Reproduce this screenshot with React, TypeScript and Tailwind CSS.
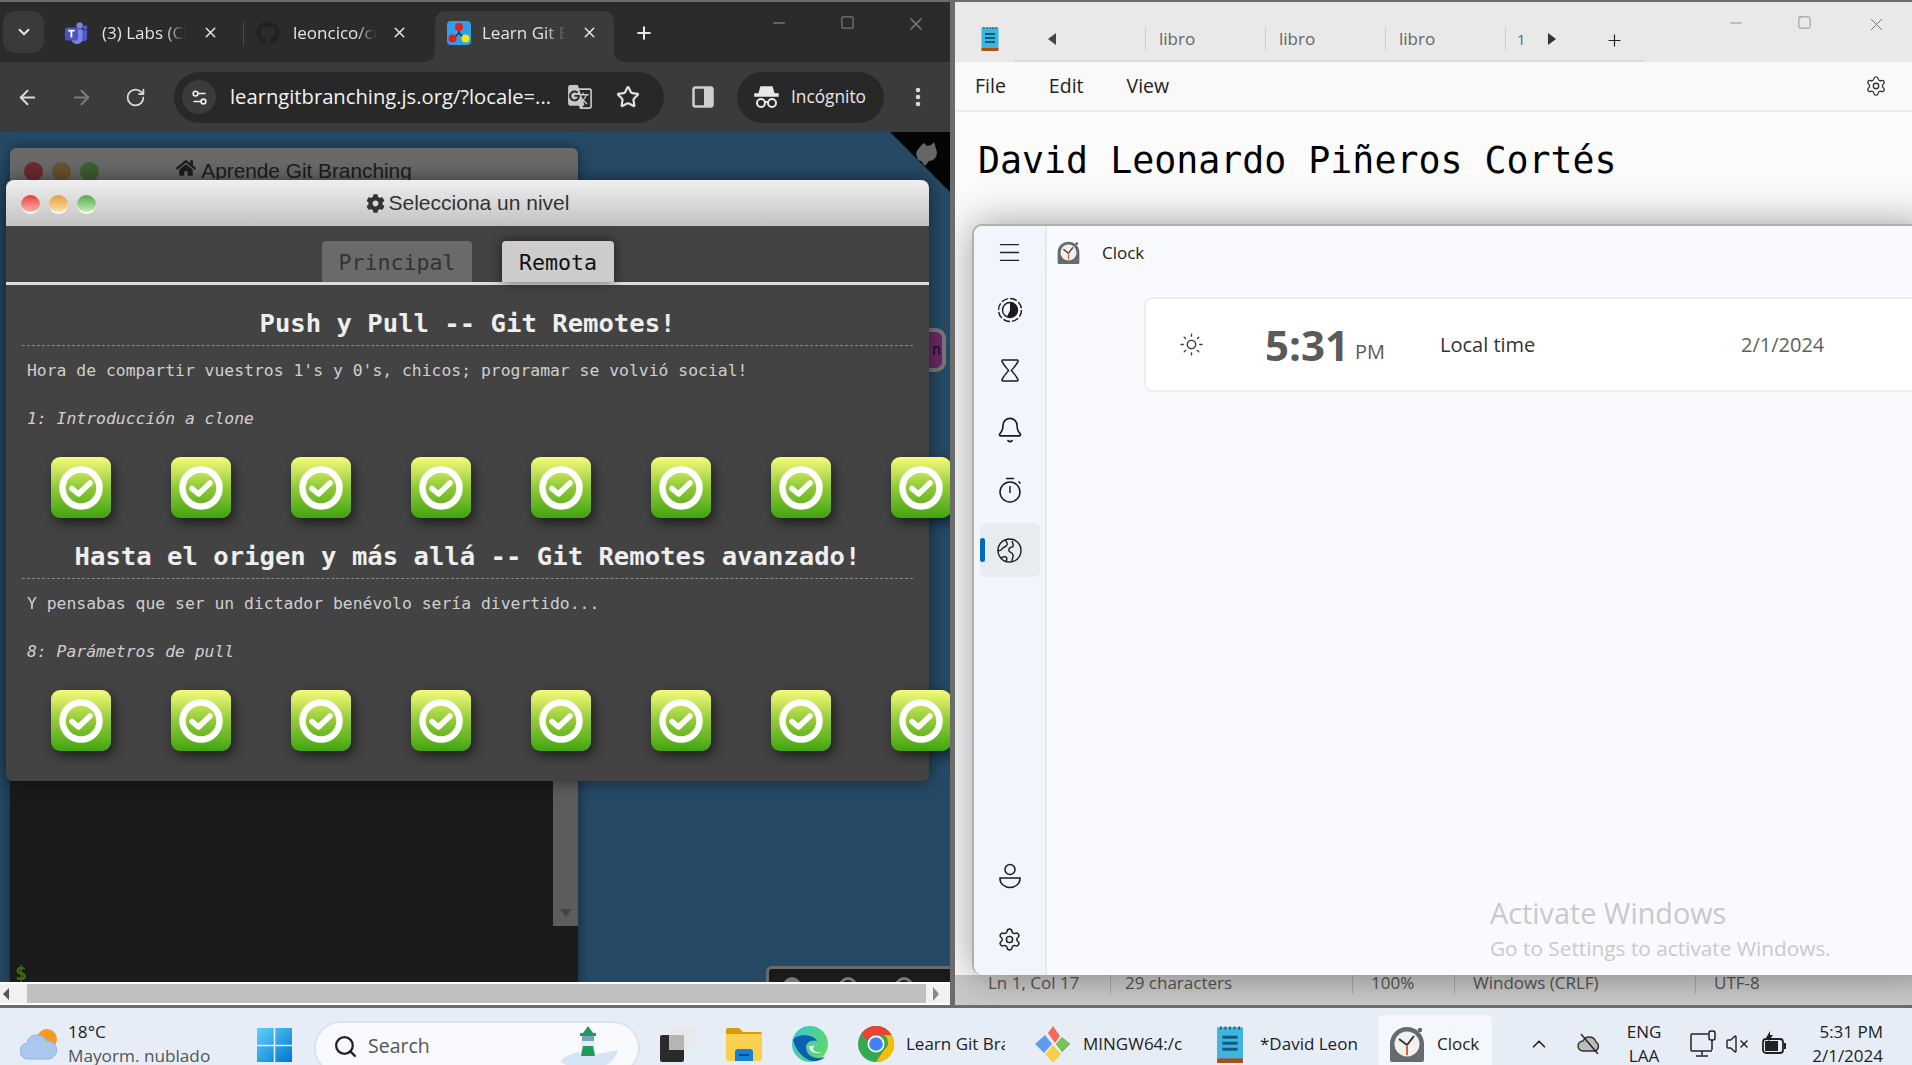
import React from "react";
import {
  ArrowLeft,
  ArrowRight,
  Bell,
  ChevronDown,
  ChevronUp,
  EllipsisVertical,
  Menu,
  Minus,
  Plus,
  RotateCw,
  Search,
  Settings,
  Settings2,
  Square,
  Star,
  Sun,
  VolumeX,
  X,
} from "lucide-react";
import { FaCog, FaGithub, FaHome } from "react-icons/fa";
import { MdGTranslate } from "react-icons/md";

const sans = "font-['Open_Sans','Noto_Sans',sans-serif]";
const mono = "font-['DejaVu_Sans_Mono',monospace]";

function TeamsIcon() {
  return (
    <svg width="26" height="24" viewBox="0 0 26 24">
      <circle cx="17" cy="4" r="3.5" fill="#7b83eb" />
      <circle cx="23" cy="6" r="2.5" fill="#5059c9" />
      <path d="M14 9h11v8a4 4 0 0 1-4 4h-7z" fill="#5059c9" />
      <path d="M8 8h12v10a6 6 0 0 1-12 0z" fill="#7b83eb" />
      <rect x="1" y="6" width="14" height="14" rx="2" fill="#4b53bc" />
      <path d="M4.5 9.5h7M8 9.5v7.5" stroke="#fff" strokeWidth="2" />
    </svg>
  );
}

function LearnGitIcon() {
  return (
    <svg width="24" height="24" viewBox="0 0 24 24">
      <rect width="24" height="24" rx="4" fill="#2e9fe8" />
      <path d="M12 6v6M12 12l-6 6M12 12l6 6" stroke="#222" strokeWidth="1.2" />
      <circle cx="12" cy="6" r="4" fill="#e81c1c" />
      <circle cx="5.5" cy="17.5" r="4" fill="#e81c1c" />
      <circle cx="18.5" cy="17.5" r="4" fill="#f0e81c" />
    </svg>
  );
}

function TabCorner({ side }: { side: "left" | "right" }) {
  return (
    <svg
      width="10"
      height="10"
      viewBox="0 0 10 10"
      className={`absolute bottom-0 ${side === "left" ? "-left-[10px]" : "-right-[10px]"}`}
    >
      <path d={side === "left" ? "M10 0v10H0a10 10 0 0 0 10-10z" : "M0 0v10h10A10 10 0 0 1 0 0z"} fill="#3b3b3b" />
    </svg>
  );
}

function ChromeTab({
  icon,
  label,
  labelClass,
  closeClass,
  active,
  className,
}: {
  icon: React.ReactNode;
  label: string;
  labelClass: string;
  closeClass: string;
  active?: boolean;
  className: string;
}) {
  return (
    <div className={`relative flex items-center h-[51px] pb-[8px] self-end ${active ? "bg-[#3b3b3b] rounded-t-[10px]" : ""} ${className}`}>
      {active && <TabCorner side="left" />}
      {active && <TabCorner side="right" />}
      <div className="w-[24px] flex justify-center shrink-0 ml-[12px]">{icon}</div>
      <div
        className={`overflow-hidden whitespace-nowrap text-[17px] text-[#e4e4e4] [mask-image:linear-gradient(90deg,#000_75%,transparent)] w-[84px] ${labelClass}`}
      >
        {label}
      </div>
      <X size={17} color="#e8e8e8" className={`absolute top-[13px] ${closeClass}`} strokeWidth={2} />
    </div>
  );
}

function Lights({ dim }: { dim?: boolean }) {
  const cls = dim
    ? ["bg-[#6c2b2b]", "bg-[#6a5230]", "bg-[#3d5f30]"]
    : [
        "bg-linear-to-b from-[#e03a3a] to-[#ffb0a8]",
        "bg-linear-to-b from-[#e0a040] to-[#ffe0a0]",
        "bg-linear-to-b from-[#50a850] to-[#c0f0b0]",
      ];
  return (
    <div className="flex gap-[9px]">
      {cls.map((c) => (
        <div key={c} className={`w-[19px] h-[19px] rounded-full ${c} ${dim ? "" : "border-b-2 border-white"}`} />
      ))}
    </div>
  );
}

function LevelIcon() {
  return (
    <div className="w-[60px] h-[61px] shrink-0 rounded-[9px] bg-linear-to-b from-[#f7fb7a] via-[#8fca36] via-50% to-[#3da50e] flex items-center justify-center shadow-[3px_5px_12px_rgba(0,0,0,0.55)]">
      <svg width="44" height="44" viewBox="0 0 44 44">
        <circle cx="22" cy="22" r="18.5" fill="none" stroke="#fff" strokeWidth="6.5" />
        <path d="M13 22.5l6.5 5.5L31 17" fill="none" stroke="#fff" strokeWidth="5.5" strokeLinecap="round" strokeLinejoin="round" />
      </svg>
    </div>
  );
}

function LevelSection({ title, desc, sub }: { title: string; desc: string; sub: string }) {
  return (
    <div>
      <h2 className="mx-[16px] mt-[19px] h-[42px] border-b border-dashed border-[#8a8a8a] text-center text-[25.6px] leading-[38px] font-bold text-[#eeeeee] whitespace-nowrap">
        {title}
      </h2>
      <p className="ml-[21px] mt-[13px] h-[24px] text-[16.4px] leading-[24px] text-[#cfcfcf] whitespace-nowrap">{desc}</p>
      <p className="ml-[21px] mt-[24px] h-[23px] text-[16.4px] leading-[24px] italic text-[#cfcfcf] whitespace-nowrap">{sub}</p>
      <div className="flex gap-[60px] pl-[45px] mt-[27px]">
        {[0, 1, 2, 3, 4, 5, 6, 7].map((n) => (
          <LevelIcon key={n} />
        ))}
      </div>
    </div>
  );
}

function LevelDialog() {
  return (
    <div className={`absolute left-[6px] top-[48px] w-[923px] h-[601px] rounded-[6px] bg-[#434343] shadow-[0_0_18px_rgba(0,0,0,0.5)] ${mono}`}>
      <div className="relative h-[46px] rounded-t-[8px] bg-linear-to-b from-[#efefef] to-[#c2c2c2] flex items-center justify-center font-['Liberation_Sans',sans-serif] text-[21px] text-[#333]">
        <div className="absolute left-[15px] top-[15px]">
          <Lights />
        </div>
        <FaCog size={19} className="mr-[4px]" />
        Selecciona un nivel
      </div>
      <div className="h-[59px] border-b-[3px] border-[#dddddd] flex items-end pl-[316px] gap-[30px] text-[21.6px]">
        <div className="w-[150px] h-[41px] pt-[4px] rounded-t-[4px] bg-[#6a6a6a] text-[#333] flex items-center justify-center">Principal</div>
        <div className="w-[112px] h-[41px] pt-[4px] rounded-t-[4px] bg-[#cccccc] text-[#111] flex items-center justify-center shadow-[0_0_12px_rgba(0,0,0,0.6)]">Remota</div>
      </div>
      <LevelSection
        title="Push y Pull -- Git Remotes!"
        desc="Hora de compartir vuestros 1's y 0's, chicos; programar se volvió social!"
        sub="1: Introducción a clone"
      />
      <LevelSection
        title="Hasta el origen y más allá -- Git Remotes avanzado!"
        desc="Y pensabas que ser un dictador benévolo sería divertido..."
        sub="8: Parámetros de pull"
      />
    </div>
  );
}

function BrowserPage() {
  return (
    <div className="relative flex-1 bg-[#264a66] overflow-hidden">
      {/* ventana de atras */}
      <div className="absolute left-[10px] top-[16px] w-[568px] h-[900px] rounded-t-[6px] bg-[#1a1a1a] shadow-[0_0_14px_rgba(0,0,0,0.45)]">
        <div className="relative h-[40px] rounded-t-[6px] bg-[#696969] flex items-start justify-center pt-[7px] text-[20.8px] text-[#1c1c1c] font-['Liberation_Sans',sans-serif]">
          <div className="absolute left-[14px] top-[14px]">
            <Lights dim />
          </div>
          <FaHome size={20} className="mr-[5px] mt-[3px]" />
          Aprende Git Branching
        </div>
        <div className="absolute right-0 top-[600px] w-[25px] h-[178px] bg-[#5c5c5c] flex items-end justify-center pb-[9px]">
          <div className="w-0 h-0 border-x-[6px] border-x-transparent border-t-[8px] border-t-[#444]" />
        </div>
        <div className={`absolute left-[5px] top-[810px] text-[20px] font-bold text-[#3f6a10] ${mono}`}>$</div>
      </div>

      <svg className="absolute right-0 top-0" width="60" height="60" viewBox="0 0 60 60">
        <polygon points="0,0 60,0 60,60" fill="#050505" />
        <path d="M27 19c2-3 4-6 7-8l3 3 4-1 3-3 3 10c0 6-4 9-8 9l-4 5-4-5-3-1-2-6z" fill="#666" />
      </svg>

      {/* boton de la derecha, tapado por el dialogo */}
      <div className="absolute left-[918px] top-[196px] w-[28px] h-[44px] rounded-[10px] border-[4px] border-[#777] bg-[#6b2a68] flex items-center justify-end pr-[1px] text-[15px] text-[#111] font-['DejaVu_Sans_Mono',monospace] overflow-hidden">
        n
      </div>

      <div className="absolute left-[766px] top-[834px] w-[200px] h-[40px] rounded-tl-[6px] border-[3px] border-[#6a6a6a] bg-[#1a1a1a] flex pl-[14px] gap-[38px] pt-[8px]">
        <div className="w-[18px] h-[18px] rounded-full border-[5px] border-[#777]" />
        <div className="w-[18px] h-[18px] rounded-full border-[3px] border-[#777]" />
        <div className="w-[18px] h-[18px] rounded-full border-[3px] border-[#777]" />
      </div>

      <LevelDialog />
    </div>
  );
}

function ChromeWindow() {
  return (
    <div className={`w-[955px] h-full shrink-0 flex flex-col border-r-[5px] border-[#6c6c6c] ${sans}`}>
      <div className="h-[60px] bg-[#2b2b2b] flex relative">
        <div className="ml-[3px] mt-[9px] w-[41px] h-[42px] rounded-[12px] bg-[#3a3a3a] flex items-center justify-center">
          <ChevronDown size={18} color="#e8e8e8" strokeWidth={2.5} />
        </div>
        <ChromeTab className="ml-[8px] w-[191px]" icon={<TeamsIcon />} label="(3) Labs (Chat | Microsoft Teams" labelClass="ml-[14px]" closeClass="right-[24px]" />
        <div className="w-px h-[24px] bg-[#4a4a4a] self-center mt-[3px]" />
        <ChromeTab className="w-[190px]" icon={<FaGithub size={24} color="#1c2228" />} label="leoncico/curso-git" labelClass="ml-[13px]" closeClass="right-[26px]" />
        <ChromeTab className="ml-[1px] w-[179px]" active icon={<LearnGitIcon />} label="Learn Git Branching" labelClass="ml-[11px]" closeClass="right-[16px]" />
        <Plus size={20} color="#e8e8e8" strokeWidth={2.5} className="ml-[20px] mt-[21px]" />
        <div className="absolute left-[770px] top-[12px] flex">
          <Minus size={18} color="#777" />
          <Square size={15} color="#777" className="ml-[52px] mt-[1px]" />
          <X size={20} color="#777" className="ml-[51px]" />
        </div>
      </div>
      <div className="h-[70px] bg-[#3b3b3b] flex items-center">
        <ArrowLeft size={23} color="#dcdcdc" className="ml-[16px]" strokeWidth={2} />
        <ArrowRight size={23} color="#7d7d7d" className="ml-[31px]" strokeWidth={2} />
        <RotateCw size={21} color="#dcdcdc" className="ml-[32px]" strokeWidth={2} />
        <div className="ml-[28px] w-[490px] h-[51px] rounded-full bg-[#282828] flex items-center">
          <div className="ml-[8px] w-[34px] h-[34px] rounded-full bg-[#3b3b3b] flex items-center justify-center">
            <Settings2 size={19} color="#eee" />
          </div>
          <div className="ml-[14px] w-[320px] pb-[2px] text-[20.2px] text-[#f2f2f2] whitespace-nowrap">learngitbranching.js.org/?locale=...</div>
          <MdGTranslate size={26} color="#c8c8c8" className="ml-[17px]" />
          <Star size={24} color="#e2e2e2" strokeWidth={2.2} className="ml-[23px]" />
        </div>
        <svg className="ml-[27px]" width="24" height="24" viewBox="0 0 24 24">
          <rect x="2.5" y="2.5" width="19" height="19" rx="2" fill="none" stroke="#cfcfcf" strokeWidth="2.5" />
          <rect x="13" y="3" width="8" height="18" fill="#cfcfcf" />
        </svg>
        <div className="ml-[22px] w-[147px] h-[51px] rounded-full bg-[#282828] flex items-center">
          <svg className="ml-[17px]" width="25" height="24" viewBox="0 0 25 24">
            <path d="M7 2h11l2 7h4v2H1V9h4z" fill="#e8e8e8" stroke="#e8e8e8" strokeWidth="1.5" />
            <circle cx="7" cy="18" r="4" fill="none" stroke="#e8e8e8" strokeWidth="2" />
            <circle cx="18" cy="18" r="4" fill="none" stroke="#e8e8e8" strokeWidth="2" />
            <path d="M11 17h3" stroke="#e8e8e8" strokeWidth="2" />
          </svg>
          <span className="ml-[12px] text-[17.3px] text-[#e8e8e8]">Incógnito</span>
        </div>
        <EllipsisVertical size={24} color="#dcdcdc" className="ml-[22px]" strokeWidth={2.6} />
      </div>
      <BrowserPage />
      <div className="h-[23px] bg-[#f1f1f1] flex items-center border-y-2 border-white">
        <div className="w-0 h-0 ml-[3px] border-y-[6px] border-y-transparent border-r-[6px] border-r-[#555]" />
        <div className="ml-[18px] w-[899px] h-full bg-[#c0c0c0]" />
        <div className="w-0 h-0 ml-[7px] border-y-[7px] border-y-transparent border-l-[6px] border-l-[#888]" />
      </div>
    </div>
  );
}

function NotepadIcon({ w, h }: { w: number; h: number }) {
  return (
    <svg width={w} height={h} viewBox="0 0 18 25">
      <rect x="0.5" y="1.5" width="17" height="21" fill="#3fb4dc" />
      <rect x="0.5" y="22" width="17" height="3" fill="#a84f14" />
      <path d="M3 1v2M6 1v2M9 1v2M12 1v2M15 1v2" stroke="#1a5f80" strokeWidth="1.2" />
      <path d="M4 8h10M4 12h10M4 16h10" stroke="#0f5a86" strokeWidth="2" />
    </svg>
  );
}

function ClockLogo({ size }: { size: number }) {
  return (
    <svg width={size} height={size} viewBox="0 0 36 36">
      <path d="M1 18a17 17 0 0 1 34 0v16a2 2 0 0 1-2 2H3a2 2 0 0 1-2-2z" fill="#666b70" />
      <circle cx="31" cy="4" r="2.2" fill="#666" />
      <circle cx="18" cy="18" r="12.5" fill="#f2f0ec" />
      <path d="M18 19L10 13M18 19l7-9" stroke="#333" strokeWidth="2" fill="none" />
      <path d="M18 19v10" stroke="#d9603c" strokeWidth="2" />
    </svg>
  );
}

function WorldClockIcon() {
  return (
    <svg width="26" height="26" viewBox="0 0 26 26">
      <circle cx="13" cy="13" r="11.5" fill="none" stroke="#1c1c1c" strokeWidth="1.4" strokeDasharray="7 2" />
      <circle cx="13" cy="13" r="7.5" fill="none" stroke="#1c1c1c" strokeWidth="1.4" />
      <path d="M13 5.5a7.5 7.5 0 0 1 0 15 7 7 0 0 1-3-1l3-6z" fill="#1c1c1c" />
    </svg>
  );
}

function HourglassIcon() {
  return (
    <svg width="20" height="25" viewBox="0 0 22 26" fill="none" stroke="#1c1c1c" strokeWidth="1.6" strokeLinejoin="round">
      <path d="M3 1.5h16c1 0 1 1 .7 1.7C18 7 15 10 12.5 13c2.500 3 5.500 6 7.200 9.800.3.700.3 1.700-.7 1.700H3c-1 0-1-1-.7-1.700C4 19 7 16 9.500 13 7 10 4 7 2.300 3.200 2 2.500 2 1.500 3 1.500z" />
    </svg>
  );
}

function StopwatchIcon() {
  return (
    <svg width="24" height="26" viewBox="0 0 24 26" fill="none" stroke="#1c1c1c" strokeWidth="1.5">
      <circle cx="12" cy="15" r="10" />
      <path d="M8 1.500h8M12 9v7M20.500 4.500l2 2" />
    </svg>
  );
}

function GlobeIcon() {
  return (
    <svg width="25" height="25" viewBox="0 0 25 25" fill="none" stroke="#1c1c1c" strokeWidth="1.4" strokeLinejoin="round">
      <circle cx="12.500" cy="12.500" r="11.500" />
      <path d="M8 2c2 2 3 3 2 5-1 2-4 2-5 4s-4 2-4 1" />
      <path d="M15 24c-1-3 2-4 1-7s-3-2-4-4 1-4 3-4 1-3 0-6" />
      <path d="M4 20c2-1 4-2 5-1s1 3 0 5" />
    </svg>
  );
}

function PersonIcon() {
  return (
    <svg width="24" height="26" viewBox="0 0 24 26" fill="none" stroke="#1c1c1c" strokeWidth="1.5">
      <circle cx="12" cy="6.500" r="5" />
      <path d="M2 15h20c.5 6-5 9.500-10 9.500S1.500 21 2 15z" />
    </svg>
  );
}

function NavItem({ children, active }: { children: React.ReactNode; active?: boolean }) {
  return (
    <div className={`relative w-[60px] h-[54px] rounded-[6px] flex items-center justify-center ${active ? "bg-[#e8ebef]" : ""}`}>
      {active && <div className="absolute left-0 top-[15px] w-[5px] h-[24px] rounded-full bg-[#0067c0]" />}
      {children}
    </div>
  );
}

function ClockWindow() {
  return (
    <div className={`absolute left-[17px] top-[222px] w-[960px] h-[751px] rounded-l-[10px] border-l-2 border-t-2 border-[#b0b0b0] bg-[#f9fafe] flex shadow-[0_0_40px_rgba(0,0,0,0.38)] ${sans}`}>
      <div className="w-[73px] shrink-0 bg-[#f2f5fb] border-r-2 border-[#e6e9ef] rounded-l-[10px] flex flex-col items-center pb-[9px]">
        <div className="-mt-[1px]">
          <NavItem><Menu size={27} strokeWidth={1.2} color="#222" /></NavItem>
        </div>
        <div className="flex flex-col items-center gap-[6px] mt-[4px]">
          <NavItem><WorldClockIcon /></NavItem>
          <NavItem><HourglassIcon /></NavItem>
          <NavItem><Bell size={28} strokeWidth={1.4} color="#1c1c1c" /></NavItem>
          <NavItem><StopwatchIcon /></NavItem>
          <NavItem active><GlobeIcon /></NavItem>
        </div>
        <div className="flex flex-col items-center gap-[9px] mt-auto">
          <NavItem><PersonIcon /></NavItem>
          <NavItem><Settings size={25} strokeWidth={1.4} color="#1c1c1c" /></NavItem>
        </div>
      </div>
      <div className="flex-1 flex flex-col relative">
        <div className="h-[71px] pb-[18px] flex items-center pl-[10px]">
          <ClockLogo size={23} />
          <span className="ml-[22px] text-[17px] text-[#1c1c1c]">Clock</span>
        </div>
        <div className="ml-[97px] h-[95px] rounded-l-[8px] border-2 border-r-0 border-[#eceef2] bg-white flex items-center">
          <Sun size={25} strokeWidth={1.3} color="#333" className="ml-[33px]" />
          <span className="ml-[61px] w-[87px] text-[42px] font-bold text-[#5a5a5a] leading-none">5:31</span>
          <span className="ml-[3px] mt-[14px] w-[40px] text-[20px] text-[#5a5a5a]">PM</span>
          <span className="ml-[45px] mt-[1px] w-[301px] text-[20px] text-[#333]">Local time</span>
          <span className="mt-[1px] text-[20px] text-[#5f5f5f]">2/1/2024</span>
        </div>
        <div className="absolute left-[443px] top-[669px] text-[#c9c9cb] whitespace-nowrap">
          <div className="text-[28.8px] leading-[36px]">Activate Windows</div>
          <div className="text-[20.8px] leading-[30px] mt-[2px]">Go to Settings to activate Windows.</div>
        </div>
      </div>
    </div>
  );
}

function NotepadWindow() {
  const tabs = ["libro", "libro", "libro"];
  return (
    <div className={`relative flex-1 h-full flex flex-col bg-[#fbfbfb] overflow-hidden ${sans}`}>
      <div className="h-[60px] bg-[#e9e9e9] flex relative">
        <div className="ml-[26px] mt-[24px]"><NotepadIcon w={18} h={25} /></div>
        <div className="ml-[15px] w-[631px] h-full border-b-2 border-[#dcdcdc] flex items-center pt-[16px] relative">
          <div className="w-0 h-0 ml-[34px] border-y-[6px] border-y-transparent border-r-[8px] border-r-[#444]" />
          <div className="flex ml-[89px]">
            {tabs.map((t, i) => (
              <div key={i} className="w-[120px] h-[24px] border-l border-[#cdcdcd] pl-[13px] text-[17px] leading-[24px] text-[#666]">{t}</div>
            ))}
            <div className="w-[22px] h-[24px] border-l border-[#cdcdcd] pl-[11px] text-[15px] leading-[24px] text-[#666] overflow-hidden">1</div>
          </div>
          <div className="w-0 h-0 ml-[21px] border-y-[6px] border-y-transparent border-l-[8px] border-l-[#333]" />
        </div>
        <Plus size={19} strokeWidth={1.5} color="#222" className="ml-[-40px] mt-[29px]" />
        <div className="absolute left-[772px] top-[12px] flex items-start">
          <Minus size={18} strokeWidth={1} color="#777" />
          <Square size={15} strokeWidth={1.2} color="#777" className="ml-[52px] mt-[1px]" />
          <X size={21} strokeWidth={1.1} color="#777" className="ml-[54px]" />
        </div>
      </div>
      <div className="h-[50px] bg-[#f9f9f9] border-b-2 border-[#ececec] flex items-center text-[19.5px] text-[#222]">
        <span className="ml-[20px]">File</span>
        <span className="ml-[43px]">Edit</span>
        <span className="ml-[43px]">View</span>
        <Settings size={22} strokeWidth={1.4} color="#333" className="ml-auto mr-[25px]" />
      </div>
      <div className={`flex-1 pl-[23px] pt-[26px] text-[36.6px] leading-[46px] text-black ${mono}`}>David Leonardo Piñeros Cortés</div>
      <div className="h-[30px] bg-[#cacaca] flex items-center pb-[15px] text-[17px] text-[#555]">
        <span className="ml-[33px] w-[122px]">Ln 1, Col 17</span>
        <span className="w-[242px] h-[22px] border-l border-[#aaa] pl-[14px] leading-[22px]">29 characters</span>
        <span className="w-[102px] h-[22px] border-l border-[#aaa] pl-[18px] leading-[22px]">100%</span>
        <span className="w-[241px] h-[22px] border-l border-[#aaa] pl-[18px] leading-[22px]">Windows (CRLF)</span>
        <span className="h-[22px] border-l border-[#aaa] pl-[18px] leading-[22px]">UTF-8</span>
      </div>
      <ClockWindow />
    </div>
  );
}

function WeatherIcon() {
  return (
    <svg width="37" height="34" viewBox="0 0 37 34">
      <circle cx="27" cy="12" r="10" fill="#f59a23" />
      <path d="M9 32a8 8 0 0 1-2-16 10 10 0 0 1 19-2 9 9 0 0 1 3 18z" fill="#a9c8ec" stroke="#8fb4e0" />
    </svg>
  );
}

function StartIcon() {
  return (
    <svg width="35" height="35" viewBox="0 0 35 35">
      <defs>
        <linearGradient id="startGrad" x1="0" y1="0" x2="1" y2="1">
          <stop offset="0" stopColor="#5dd3fb" />
          <stop offset="1" stopColor="#0074cf" />
        </linearGradient>
      </defs>
      <path d="M0 1h16.700v16.700H0zM18.300 1H35v16.700H18.300zM0 19.300h16.700V35H0zM18.300 19.300H35V35H18.300z" fill="url(#startGrad)" />
    </svg>
  );
}

function Lighthouse() {
  return (
    <svg width="62" height="40" viewBox="0 0 62 40">
      <path d="M2 36c6-8 14-8 18-10 8 4 22 2 40-2-2 8-8 14-14 16H10z" fill="#d5e5f5" />
      <path d="M24 12h12l2 18H22z" fill="#dff0ee" />
      <path d="M25 20h10l2 10H23z" fill="#1e9a5c" />
      <rect x="22" y="7" width="16" height="3" fill="#1e9a5c" />
      <path d="M30 0l5 7H25z" fill="#1e9a5c" />
      <rect x="24" y="10" width="12" height="5" fill="#7f9fc0" />
    </svg>
  );
}

function TaskViewIcon() {
  return (
    <svg width="36" height="36" viewBox="0 0 36 36">
      <rect x="0" y="9" width="24" height="27" rx="2" fill="#2a2a2a" />
      <rect x="9" y="0" width="27" height="24" rx="2" fill="#e8e8e8" opacity="0.9" />
      <rect x="9" y="9" width="15" height="15" fill="#b5b5b5" />
    </svg>
  );
}

function FolderIcon() {
  return (
    <svg width="36" height="33" viewBox="0 0 36 33">
      <path d="M0 2a2 2 0 0 1 2-2h11l4 4h17a2 2 0 0 1 2 2v4H0z" fill="#d69a0b" />
      <path d="M0 6h36v25a2 2 0 0 1-2 2H2a2 2 0 0 1-2-2z" fill="#fbd04e" />
      <path d="M9 33v-9a3 3 0 0 1 3-3h12a3 3 0 0 1 3 3v9z" fill="#1283d8" />
      <rect x="13" y="26" width="10" height="2" fill="#0a4a92" />
    </svg>
  );
}

function EdgeIcon() {
  return (
    <svg width="36" height="36" viewBox="0 0 36 36">
      <defs>
        <linearGradient id="edgeGrad" x1="0" y1="0" x2="1" y2="0.6">
          <stop offset="0" stopColor="#36c4d8" />
          <stop offset="1" stopColor="#5fd86a" />
        </linearGradient>
      </defs>
      <circle cx="18" cy="18" r="18" fill="url(#edgeGrad)" />
      <path d="M1 14C4 26 14 36 24 35c4-.4 7-2 9-4-8 3-18 0-19-9-.6-6 6-9 11-7-3-7-20-8-24-1z" fill="#0c5fae" />
      <path d="M17 20c0 6 7 9 14 6-3 1-9 1-10-3-.5-2 2-4 5-3.500z" fill="#f3fbf5" />
    </svg>
  );
}

function ChromeIcon() {
  return (
    <svg width="36" height="36" viewBox="0 0 36 36">
      <circle cx="18" cy="18" r="18" fill="#34a853" />
      <path d="M18 0a18 18 0 0 1 15.600 9H18a9 9 0 0 0-8.600 6.500L3.300 7.600A18 18 0 0 1 18 0z" fill="#ea4335" />
      <path d="M33.600 9A18 18 0 0 1 18 36l8-12a9 9 0 0 0 0-15z" fill="#fbbc04" />
      <circle cx="18" cy="18" r="8.500" fill="#fff" />
      <circle cx="18" cy="18" r="6.800" fill="#3f83f0" />
    </svg>
  );
}

function GitGuiIcon() {
  return (
    <svg width="37" height="37" viewBox="0 0 37 37">
      <path d="M18 0l7 10-5 7-7-10z" fill="#f26a5a" />
      <path d="M0 18l10-9 7 9-8 9z" fill="#5f9cf0" />
      <path d="M20 18l7-8 9 8-9 9z" fill="#79c25a" stroke="#fff" />
      <path d="M10 28l8-9 8 9-8 9z" fill="#f7cf4a" />
    </svg>
  );
}

function TaskLabel({ text, w }: { text: string; w: string }) {
  return <div className={`overflow-hidden whitespace-nowrap text-[17px] text-[#222] ${w}`}>{text}</div>;
}

function Taskbar() {
  return (
    <div className={`h-[57px] bg-[#e6edf7] flex items-center pt-[15px] overflow-hidden relative ${sans}`}>
      <div className="ml-[20px]"><WeatherIcon /></div>
      <div className="ml-[11px] w-[189px] -mt-[1px] text-[17.2px] leading-[24px] text-[#222]">
        <div>18°C</div>
        <div className="text-[#555]">Mayorm. nublado</div>
      </div>
      <StartIcon />
      <div className="ml-[22px] w-[326px] h-[54px] self-start mt-[-2px] rounded-full bg-[#f8fafd] border-2 border-[#dbe3ee] flex items-center pb-[4px] overflow-hidden">
        <Search size={25} strokeWidth={2.2} color="#222" className="ml-[17px]" />
        <span className="ml-[10px] w-[190px] text-[19.5px] text-[#555]">Search</span>
        <Lighthouse />
      </div>
      <div className="ml-[20px]"><TaskViewIcon /></div>
      <div className="ml-[30px]"><FolderIcon /></div>
      <div className="ml-[30px]"><EdgeIcon /></div>
      <div className="ml-[30px]"><ChromeIcon /></div>
      <div className="ml-[12px]"><TaskLabel text="Learn Git Branching" w="w-[99px]" /></div>
      <div className="ml-[30px]"><GitGuiIcon /></div>
      <div className="ml-[11px]"><TaskLabel text="MINGW64:/c/Users" w="w-[99px]" /></div>
      <div className="ml-[34px]"><NotepadIcon w={28} h={38} /></div>
      <div className="ml-[16px]"><TaskLabel text="*David Leonardo" w="w-[98px]" /></div>
      <div className="ml-[20px] w-[114px] h-[50px] self-end rounded-t-[6px] bg-[#f4f7fb] flex items-center pl-[11px] pt-[8px] mt-[-8px]">
        <ClockLogo size={36} />
        <span className="ml-[12px] text-[17px] text-[#222]">Clock</span>
      </div>
      <ChevronUp size={22} strokeWidth={1.8} color="#222" className="ml-[36px]" />
      <svg className="ml-[27px]" width="24" height="24" viewBox="0 0 24 24">
        <path d="M6 19a5 5 0 0 1 0-10 7 7 0 0 1 13 1 5 5 0 0 1-1 9z" fill="#bcbcbc" stroke="#333" strokeWidth="1.4" />
        <path d="M4 2l17 20" stroke="#222" strokeWidth="1.4" />
      </svg>
      <div className="ml-[25px] w-[36px] text-center text-[17px] leading-[24px] text-[#222]">
        <div>ENG</div>
        <div>LAA</div>
      </div>
      <svg className="ml-[28px]" width="26" height="28" viewBox="0 0 26 28" fill="none" stroke="#222" strokeWidth="1.5">
        <path d="M18 4H2a1 1 0 0 0-1 1v15a1 1 0 0 0 1 1h20M12 21v4M6 26h12" />
        <rect x="19" y="1" width="6" height="9" rx="2" />
        <path d="M22 10v10" />
      </svg>
      <VolumeX size={24} strokeWidth={1.4} color="#222" className="ml-[9px]" />
      <svg className="ml-[13px]" width="25" height="26" viewBox="0 0 25 26">
        <rect x="1" y="8" width="20" height="14" rx="3" fill="none" stroke="#222" strokeWidth="1.8" />
        <rect x="3" y="10" width="13" height="10" fill="#222" />
        <rect x="22" y="12" width="2" height="6" fill="#222" />
        <path d="M8 0L4 7h3l-1 4 5-7H8z" fill="#222" />
      </svg>
      <div className="ml-auto mr-[29px] text-right text-[17px] leading-[24px] text-[#222]">
        <div>5:31 PM</div>
        <div>2/1/2024</div>
      </div>
    </div>
  );
}

export default function App() {
  return (
    <div className="w-[1912px] h-[1065px] overflow-hidden flex flex-col bg-[#6c6c6c]">
      <div className="h-[2px] shrink-0" />
      <div className="h-[1003px] shrink-0 flex">
        <ChromeWindow />
        <NotepadWindow />
      </div>
      <div className="h-[3px] shrink-0" />
      <Taskbar />
    </div>
  );
}
